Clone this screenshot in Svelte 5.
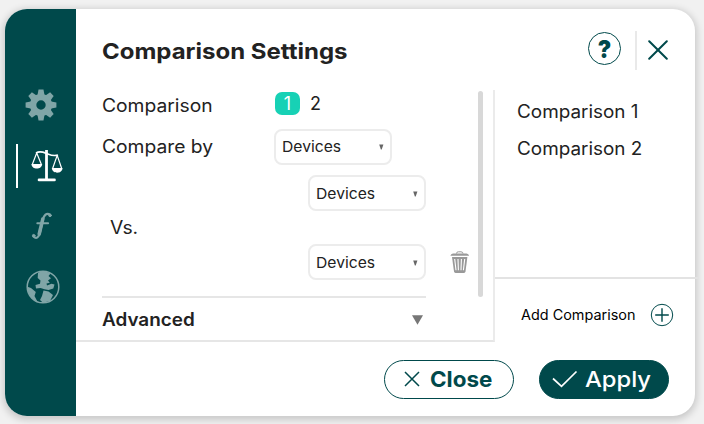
<script>
  let selected = $state(1);
  const teeth = [0, 45, 90, 135, 180, 225, 270, 315];
</script>

{#snippet select(cls)}
  <button class="select {cls}">
    <span class="t dev">Devices</span>
    <svg width="5" height="6" viewBox="0 0 5 6"><path d="M.2 .5H4.4L2.7 5.4H1.9Z" fill="#666" /></svg>
  </button>
{/snippet}

<div class="page">
  <div class="card">
    <nav>
      <div class="item gear">
        <svg width="32" height="32" viewBox="-16 -16 32 32" fill="#80a5a7">
          {#each teeth as a}
            <path d="M-3.7 -9L-2.5 -15.4H2.5L3.7 -9Z" transform="rotate({a})" />
          {/each}
          <circle r="7.9" fill="none" stroke="#80a5a7" stroke-width="6.4" />
        </svg>
      </div>
      <div class="item scale">
        <i></i>
        <svg width="32" height="33" viewBox="0 0 32 33" fill="none" stroke="#fff">
          <path d="M15.5 1V30" stroke-width="2.8" />
          <path d="M8 30.9H23.5" stroke-width="2.6" stroke-linecap="round" />
          <path d="M5 4C9 1.5 12 3 15.5 4.4S22 7.6 27 6" stroke-width="1.7" />
          <path d="M5.7 4L1.4 15.2M5.7 4L10.3 15.2M26.2 6.4L21.7 19.2M26.2 6.4L30.6 19.2" stroke-width="1.2" />
          <path d="M.4 15H11.2C11 18 8.5 19.6 5.8 19.6S.6 18 .4 15ZM20.8 19H31.6C31.4 22 29 23.7 26.2 23.7S21 22 20.8 19Z" fill="#fff" stroke="none" />
        </svg>
      </div>
      <div class="item fn">
        <svg width="22" height="28" viewBox="0 0 22 28" fill="none" stroke="#80a5a7" stroke-linecap="round">
          <path d="M2.6 24.5C5.5 27.8 8.1 24.5 9 20.5L12 7.5C12.8 3.5 15.5 .2 19 2.7" stroke-width="2.2" />
          <path d="M8.2 22L11.8 7" stroke-width="3.5" />
          <path d="M6.3 11.3H17.1" stroke-width="2" />
          <circle cx="2.7" cy="23.7" r="1.3" fill="#80a5a7" /><circle cx="19" cy="3.4" r="1.3" fill="#80a5a7" />
        </svg>
      </div>
      <div class="item globe">
        <svg width="34" height="34" viewBox="0 0 34 34">
          <circle cx="17" cy="17" r="15.8" fill="none" stroke="#80a5a7" stroke-width="1.5" />
          <path fill="#80a5a7" d="M12 3C15 1 21 1 24.5 3.6L22.5 6L25 8.3L22 10.5L23.8 12.7L20.5 13.5L21 15.5L25.5 13.8L28.5 14.5L27.3 18.5L22.5 20L18.5 19.2L14.5 18L10 18.5L9.5 15L14 13.8L14.5 10.5L11.7 8Z" />
          <path fill="#80a5a7" d="M1.5 16.8L5 18L9.8 22L8.5 26L11.5 31.8C5 29.5 1.3 23 1.5 16.8ZM17.5 20.5L22.5 21.5L27 25L24 31L17 32.7L14 30L16 26Z" />
        </svg>
      </div>
    </nav>

    <main>
      <header>
        <h1 class="t">Comparison Settings</h1>
        <button class="help" aria-label="Help"><b>?</b></button>
        <button class="x" aria-label="Close panel">
          <svg width="20" height="20" viewBox="0 0 20 20"><path d="M1.2 1.2L18.8 18.8M18.8 1.2L1.2 18.8" stroke="#00494b" stroke-width="2" stroke-linecap="round" /></svg>
        </button>
      </header>

      <div class="body">
        <section class="settings">
          <div class="row first">
            <span class="t label cmp">Comparison</span>
            <button class="num" class:on={selected === 1} onclick={() => (selected = 1)}>1</button>
            <button class="num" class:on={selected === 2} onclick={() => (selected = 2)}>2</button>
          </div>
          <div class="row by">
            <span class="t label cby">Compare by</span>
            {@render select('')}
          </div>
          <div class="row in">{@render select('')}</div>
          <div class="vs"><span class="t label">Vs.</span></div>
          <div class="row in last">
            {@render select('')}
            <svg class="trash" width="20" height="23" viewBox="0 0 20 23" fill="none">
              <path d="M6.5 2.6Q6.5 .8 8.3 .8H11Q13 .8 13 2.6" stroke="#999" />
              <path d="M.5 4.8Q.7 2.5 3 2.4H16.5Q18.8 2.5 19 4.8Z" fill="#999" />
              <path d="M2 6H17.4L15.5 20.6Q15.3 22 14 22H5.5Q4.2 22 4 20.6Z" fill="#999" />
              <path d="M4.7 8L6 19.3M8 8L8.4 19.3M11.4 8L11 19.3M14.7 8L13.4 19.3" stroke="#fff" stroke-width="1.1" />
            </svg>
          </div>
          <div class="advanced">
            <span class="t">Advanced</span>
            <svg width="11" height="10" viewBox="0 0 11 10"><path d="M0 .3H11L5.5 9.7Z" fill="#777" /></svg>
          </div>
          <div class="scroll"></div>
        </section>
        <aside>
          <div class="list">
            <span class="t c1">Comparison 1</span>
            <span class="t c2">Comparison 2</span>
          </div>
          <div class="add">
            <span class="t">Add Comparison</span>
            <svg width="24" height="24" viewBox="0 0 24 24" fill="none" stroke="#00494b"><circle cx="12" cy="12" r="10.7" stroke-width="1" /><path d="M5.2 12H18.8M12 5.2V18.8" stroke-width="1.4" /></svg>
          </div>
        </aside>
      </div>

      <footer>
        <button class="pill close">
          <svg width="16" height="16" viewBox="0 0 16 16"><path d="M1 1L15 15M15 1L1 15" stroke="#00494b" stroke-width="1.5" /></svg>
          <span class="t">Close</span>
        </button>
        <button class="pill apply">
          <svg width="26" height="18" viewBox="0 0 26 18" fill="none"><path d="M1 8.5L9.5 16.3L24.5 1.5" stroke="#fff" stroke-width="1.7" /></svg>
          <span class="t">Apply</span>
        </button>
      </footer>
    </main>
  </div>
</div>

<style>
  :global(body) { margin: 0; }
  * { box-sizing: border-box; }
  .page { width: 704px; height: 424px; padding: 9px 9px 8px 5px; background: #f1f1f1; font-family: Inter, "Liberation Sans", sans-serif; color: #222; overflow: hidden; }
  .card { display: flex; height: 407px; background: #fff; border-radius: 22px; box-shadow: 0 2px 7px 2px rgba(0, 0, 0, .17); }
  button { font: inherit; color: inherit; padding: 0; margin: 0; border: 0; background: none; display: flex; align-items: center; }
  svg { display: block; flex: none; }
  /* Widened letterforms, anchored on the left edge */
  .t { display: inline-block; white-space: nowrap; line-height: 20px; font-weight: 500; transform: scaleX(var(--wide, 1)); transform-origin: 0 50%; }
  nav { width: 71px; background: #00494b; border-radius: 22px 0 0 22px; padding-top: 66px; flex: none; }
  .item { height: 60.5px; display: flex; align-items: center; }
  .gear { padding-left: 20px; }
  .scale { gap: 13px; padding-left: 11px; }
  .scale i { width: 2px; height: 44px; background: #fff; }
  .fn { padding-left: 26px; }
  .globe { padding-left: 21px; }
  main { flex: 1; min-width: 0; display: flex; flex-direction: column; }
  header { height: 81px; display: flex; padding-left: 26px; }
  h1.t { --wide: 1.09; margin: 32px 0 0; width: 486px; font-size: 22px; font-weight: 700; flex: none; }
  .help { margin-top: 23px; width: 33px; height: 33px; border: 1.2px solid #00494b; border-radius: 50%; justify-content: center; color: #00494b; flex: none; }
  .help b { font-size: 25px; line-height: 28px; font-weight: 900; transform: scaleX(.9); }
  .x { margin: 22px 0 0 14px; width: 34px; height: 39px; border-left: 2px solid #e9e9e9; padding: 0 0 2px 11px; }
  .body { display: flex; height: 252px; }
  .settings { position: relative; flex: none; width: 419px; border-right: 2px solid #ebebeb; border-bottom: 2px solid #e6e6e6; padding-left: 26px; }
  .row { display: flex; align-items: center; }
  .label { font-size: 18px; font-weight: 400; --wide: 1.07; }
  .cmp, .cby { width: 172px; flex: none; }
  .first { height: 28px; }
  .first .cmp { width: 173px; padding-top: 3px; }
  .num { width: 25px; height: 23px; border-radius: 7px; justify-content: center; font-size: 18px; margin: -2px 3px 0 0; }
  .num.on { background: #17d1b5; color: #fff; margin-top: -2px; }
  .by { height: 57px; }
  .select { width: 118px; height: 36px; border: 2px solid #ececec; border-radius: 8px; padding: 1px 6px 0 6px; justify-content: space-between; background: #fff; }
  .dev { font-size: 15px; font-weight: 400; --wide: 1.045; }
  .in { height: 36px; padding-left: 206px; }
  .vs { height: 33px; padding: 7px 0 0 8px; }
  .trash { margin-left: 24px; }
  .advanced { margin-top: 16px; width: 324px; height: 42px; border-top: 2px solid #e6e6e6; display: flex; align-items: center; justify-content: space-between; padding: 3px 3px 0 0; font-size: 18px; }
  .advanced .t { font-weight: 600; --wide: 1.05; }
  .scroll { position: absolute; right: 10px; top: 1px; width: 5px; height: 206px; border-radius: 3px; background: #d8d8d8; }
  aside { flex: none; width: 201px; }
  .list { height: 189px; width: 204px; border-bottom: 2px solid #e3e3e3; display: flex; flex-direction: column; gap: 17px; padding: 12px 0 0 22px; font-size: 18px; }
  .list .t { font-weight: 400; --wide: 1.05; }
  .add { display: flex; align-items: center; justify-content: space-between; padding: 24px 22px 0 26px; font-size: 14px; color: #000; }
  .add .t { font-weight: 400; --wide: 1.03; }
  footer { flex: 1; display: flex; padding: 18px 26px 0 0; justify-content: flex-end; gap: 25px; }
  .pill { width: 130px; height: 39px; border-radius: 20px; font-size: 22px; color: #00494b; border: 1.5px solid #00494b; }
  .close { padding: 0 0 2px 19px; gap: 10px; }
  .close .t { font-weight: 700; --wide: 1.02; }
  .apply { background: #00494b; color: #fff; padding: 0 0 2px 12px; gap: 7px; }
  .apply .t { --wide: 1.08; }
</style>
